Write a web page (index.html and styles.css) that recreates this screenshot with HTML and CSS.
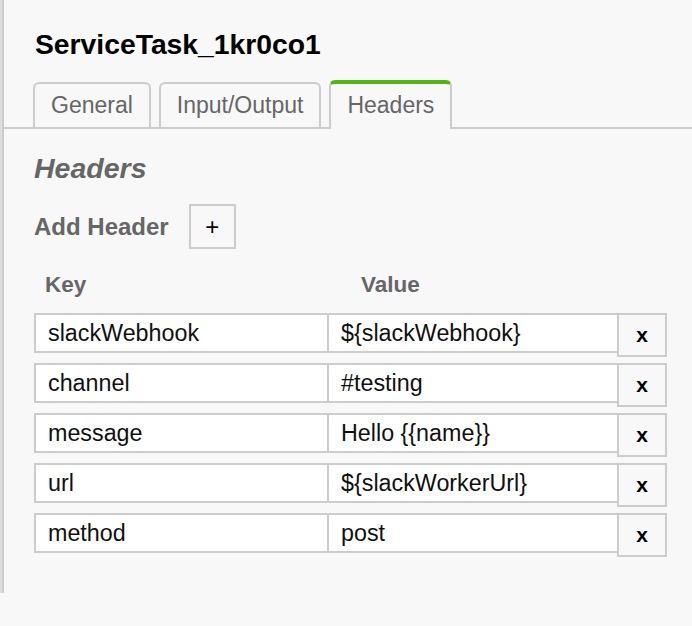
FILE: index.html
```html
<!DOCTYPE html>
<html lang="en">
<head>
<meta charset="utf-8">
<title>Properties panel</title>
<link rel="stylesheet" href="styles.css">
</head>
<body>
<div class="frame">
  <div class="panel">
    <div class="title">ServiceTask_1kr0co1</div>
    <div class="tabs">
      <div class="tab">General</div>
      <div class="tab">Input/Output</div>
      <div class="tab active">Headers</div>
    </div>
    <div class="content">
      <div class="group-title">Headers</div>
      <div class="add-row">
        <span class="add-label">Add Header</span>
        <button class="add-btn">+</button>
      </div>
      <div class="table-head">
        <div class="th key">Key</div>
        <div class="th value">Value</div>
      </div>
      <div class="rows">
        <div class="row">
          <div class="field key">slackWebhook</div>
          <div class="field value">${slackWebhook}</div>
          <button class="del">x</button>
        </div>
        <div class="row">
          <div class="field key">channel</div>
          <div class="field value">#testing</div>
          <button class="del">x</button>
        </div>
        <div class="row">
          <div class="field key">message</div>
          <div class="field value">Hello {{name}}</div>
          <button class="del">x</button>
        </div>
        <div class="row">
          <div class="field key">url</div>
          <div class="field value">${slackWorkerUrl}</div>
          <button class="del">x</button>
        </div>
        <div class="row">
          <div class="field key">method</div>
          <div class="field value">post</div>
          <button class="del">x</button>
        </div>
      </div>
    </div>
  </div>
</div>
</body>
</html>
```
FILE: styles.css
```css
html, body {
  margin: 0;
  padding: 0;
  background: #f8f8f8;
  font-family: "Liberation Sans", Arial, Helvetica, sans-serif;
}

.frame {
  border-left: 2px solid #dedede;
  height: 593px;
  box-sizing: border-box;
}

.panel {
  border-left: 2px solid #cccccc;
  height: 100%;
  box-sizing: border-box;
}

.title {
  padding: 28px 0 0 31px;
  font-size: 28.3px;
  line-height: 32px;
  font-weight: bold;
  color: #000;
}

.tabs {
  display: flex;
  align-items: flex-end;
  gap: 8px;
  margin-top: 20px;
  padding-left: 29px;
  border-bottom: 2px solid #cccccc;
}

.tab {
  box-sizing: border-box;
  height: 45px;
  padding: 0 16px;
  display: flex;
  align-items: center;
  font-size: 23px;
  color: #666;
  border: 2px solid #cccccc;
  border-bottom: none;
  border-radius: 6px 6px 0 0;
  background: #f8f8f8;
}

.tab.active {
  height: 49px;
  margin-bottom: -2px;
  border-top: 4px solid #52b415;
  padding-bottom: 2px;
}

.content {
  padding-left: 30px;
}

.group-title {
  margin-top: 23px;
  font-size: 28.5px;
  line-height: 32px;
  font-weight: bold;
  font-style: italic;
  color: #666;
}

.add-row {
  display: flex;
  align-items: center;
  gap: 20px;
  margin-top: 20px;
}

.add-label {
  font-size: 24px;
  font-weight: bold;
  color: #666;
}

.add-btn {
  box-sizing: border-box;
  width: 47px;
  height: 45px;
  margin: 0;
  padding: 0;
  border: 2px solid #cccccc;
  background: #f8f8f8;
  font-family: "Liberation Sans", Arial, sans-serif;
  font-size: 24px;
  color: #000;
  line-height: 1;
}

.table-head {
  display: flex;
  margin-top: 23px;
}

.th {
  font-size: 22.5px;
  line-height: 26px;
  font-weight: bold;
  color: #666;
}

.th.key {
  width: 293px;
  padding-left: 11px;
  box-sizing: border-box;
}

.th.value {
  padding-left: 34px;
}

.rows {
  margin-top: 15px;
  display: flex;
  flex-direction: column;
  gap: 6px;
}

.row {
  display: flex;
  align-items: flex-start;
  height: 44px;
}

.field {
  box-sizing: border-box;
  height: 40px;
  display: flex;
  align-items: center;
  background: #fff;
  border: 2px solid #cccccc;
  font-size: 23.3px;
  color: #111;
  padding: 0 12px;
  white-space: nowrap;
}

.field.key {
  width: 293px;
  border-right: none;
}

.field.value {
  width: 292px;
}

.del {
  box-sizing: border-box;
  width: 50px;
  height: 44px;
  margin: 0 0 0 -2px;
  padding: 0 0 2px 0;
  border: 2px solid #cccccc;
  background: #f8f8f8;
  font-family: "Liberation Sans", Arial, sans-serif;
  font-size: 21px;
  font-weight: bold;
  color: #000;
  line-height: 1;
}
```
